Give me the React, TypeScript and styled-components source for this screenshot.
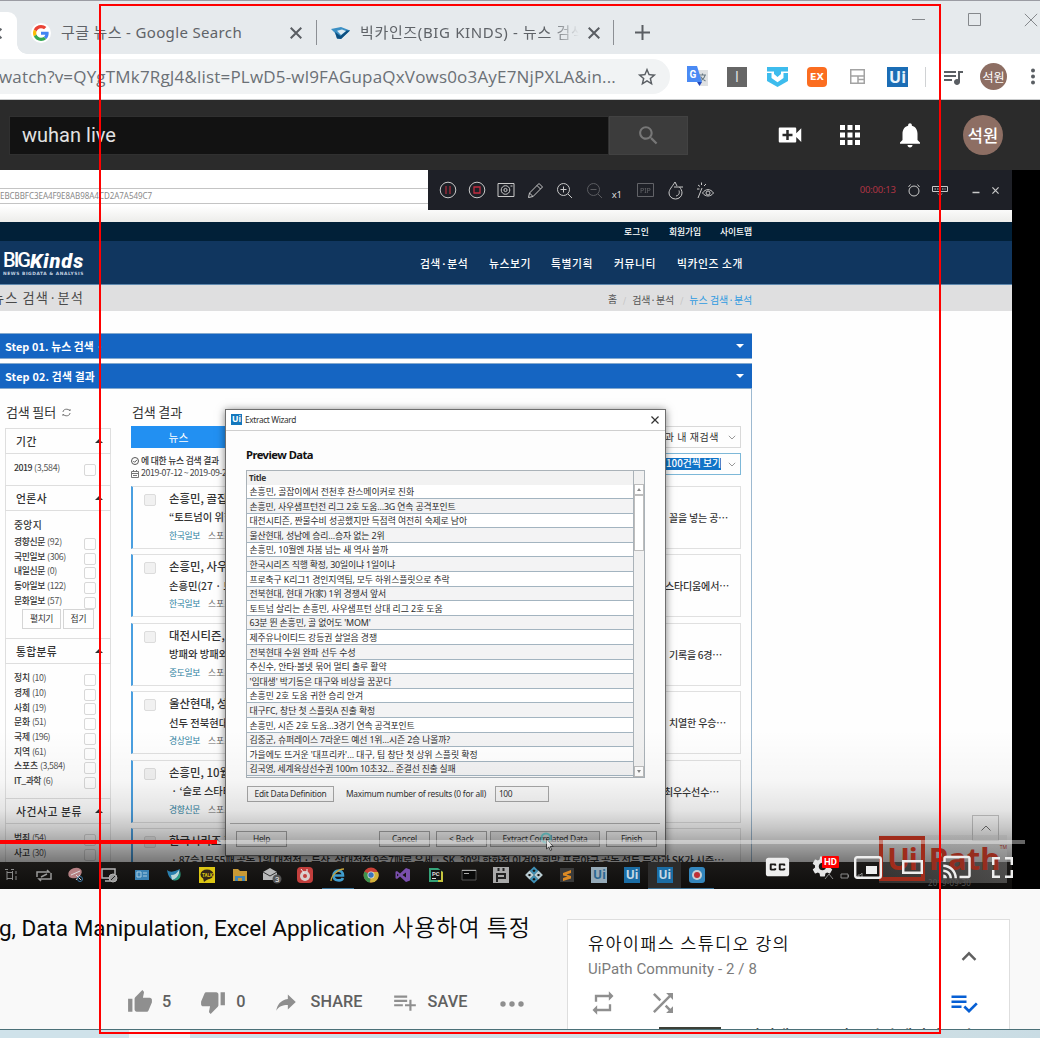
import React, { useLayoutEffect, useRef, useState } from "react";
import styled, { createGlobalStyle } from "styled-components";

const KR = `"Noto Sans", "Noto Sans CJK KR", sans-serif`;
const KRPAGE = `"Noto Sans CJK KR", sans-serif`;
const RB = `Roboto, "Noto Sans CJK KR", sans-serif`;

const Global = createGlobalStyle`
  * { box-sizing: border-box; }
  html, body { margin: 0; padding: 0; background: #f9f9f9; }
  body { font-family: ${KR}; }
  svg { display: block; flex: none; }
`;

/* ---------- text and icon primitives ---------- */

interface TextProps {
  $size: number;
  $color?: string;
  $weight?: number;
  $font?: string;
  $ml?: number;
  $mt?: number;
  $italic?: boolean;
}

const Text = styled.span<TextProps>`
  flex: none;
  white-space: pre;
  line-height: 1;
  font-family: ${(p) => p.$font ?? KRPAGE};
  font-size: ${(p) => p.$size}px;
  font-weight: ${(p) => p.$weight ?? 400};
  font-style: ${(p) => (p.$italic ? "italic" : "normal")};
  color: ${(p) => p.$color ?? "#333"};
  margin-left: ${(p) => p.$ml ?? 0}px;
  margin-top: ${(p) => p.$mt ?? 0}px;
`;

/* Text that spreads its letters to fill a given width. */
function Fit({ w, children, ...rest }: TextProps & { w: number; children: string }) {
  const ref = useRef<HTMLSpanElement>(null);
  const [spacing, setSpacing] = useState<number | null>(null);
  useLayoutEffect(() => {
    if (spacing === null && ref.current) {
      const natural = ref.current.getBoundingClientRect().width;
      setSpacing((w - natural) / children.length);
    }
  }, [spacing, w, children]);
  return (
    <Text ref={ref} {...rest} style={{ letterSpacing: spacing ?? 0 }}>
      {children}
    </Text>
  );
}

const Cell = styled.div<{ $w: number; $ml?: number }>`
  flex: none;
  display: flex;
  align-items: center;
  justify-content: center;
  width: ${(p) => p.$w}px;
  margin-left: ${(p) => p.$ml ?? 0}px;
`;

function Icon({ d, s = 24, c = "#606060" }: { d: string; s?: number; c?: string }) {
  return (
    <svg width={s} height={s} viewBox="0 0 24 24" fill={c}>
      <path d={d} />
    </svg>
  );
}

const P = {
  up: "M1 21h4V9H1v12zm22-11c0-1.1-.9-2-2-2h-6.31l.95-4.57.03-.32c0-.41-.17-.79-.44-1.06L14.17 1 7.59 7.59C7.22 7.95 7 8.45 7 9v10c0 1.1.9 2 2 2h9c.83 0 1.54-.5 1.84-1.22l3.02-7.05c.09-.23.14-.47.14-.73v-2z",
  down: "M15 3H6c-.83 0-1.54.5-1.84 1.22l-3.02 7.05c-.09.23-.14.47-.14.73v2c0 1.1.9 2 2 2h6.31l-.95 4.57-.03.32c0 .41.17.79.44 1.06L9.83 23l6.59-6.59c.36-.36.58-.86.58-1.41V5c0-1.1-.9-2-2-2zm4 0v12h4V3h-4z",
  share: "M13.7 9.3V5.1L21 12l-7.3 7v-4.2C8.6 14.8 5.3 16.300 3 20 4 14.700 6.800 10.300 13.700 9.300Z",
  save: "M14 10H2v2h12v-2zm0-4H2v2h12V6zm4 8v-4h-2v4h-4v2h4v4h2v-4h4v-2h-4zM2 16h8v-2H2v2z",
  saved: "M14 10H2v2h12v-2zm0-4H2v2h12V6zM2 16h8v-2H2v2zm19.5-4.500L23 13l-6.990 7-4.510-4.500L13 14l3.010 3 5.490-5.500z",
  repeat: "M7 7h10v3l4-4-4-4v3H5v6h2V7zm10 10H7v-3l-4 4 4 4v-3h12v-6h-2v4z",
  shuffle: "M10.590 9.170L5.410 4 4 5.410l5.170 5.170 1.420-1.410zM14.500 4l2.040 2.040L4 18.590 5.410 20 17.960 7.460 20 9.500V4h-5.500zm.33 9.410l-1.410 1.410 3.130 3.130L14.500 20H20v-5.500l-2.040 2.040-3.130-3.130z",
  search: "M15.5 14h-.79l-.28-.27C15.41 12.59 16 11.11 16 9.5 16 5.91 13.09 3 9.5 3S3 5.91 3 9.5 5.91 16 9.5 16c1.61 0 3.09-.59 4.23-1.57l.27.28v.79l5 4.99L20.49 19l-4.99-5zm-6 0C7.01 14 5 11.99 5 9.5S7.01 5 9.5 5 14 7.01 14 9.5 11.99 14 9.5 14z",
  create: "M17 10.500V7c0-.55-.45-1-1-1H4c-.55 0-1 .45-1 1v10c0 .55.45 1 1 1h12c.55 0 1-.45 1-1v-3.500l4 4v-11l-4 4zM14 13h-3v3H9v-3H6v-2h3V8h2v3h3v2z",
  apps: "M4 8h4V4H4v4zm6 12h4v-4h-4v4zm-6 0h4v-4H4v4zm0-6h4v-4H4v4zm6 0h4v-4h-4v4zm6-10v4h4V4h-4zm-6 4h4V4h-4v4zm6 6h4v-4h-4v4zm0 6h4v-4h-4v4z",
  bell: "M12 22c1.100 0 2-.9 2-2h-4c0 1.100.89 2 2 2zm6-6v-5c0-3.070-1.640-5.640-4.500-6.320V4c0-.83-.67-1.500-1.500-1.500s-1.500.67-1.500 1.500v.68C7.630 5.360 6 7.920 6 11v5l-2 2v1h16v-1l-2-2z",
  cast: "M21 3H3c-1.1 0-2 .9-2 2v3h2V5h18v14h-7v2h7c1.1 0 2-.9 2-2V5c0-1.1-.9-2-2-2zM1 18v3h3c0-1.66-1.34-3-3-3zm0-4v2c2.76 0 5 2.240 5 5h2c0-3.870-3.130-7-7-7zm0-4v2c4.970 0 9 4.030 9 9h2c0-6.080-4.930-11-11-11z",
  gear: "M19.14 12.94c.04-.3.06-.61.06-.94 0-.32-.02-.64-.07-.94l2.03-1.58c.18-.14.23-.41.12-.61l-1.92-3.32c-.12-.22-.37-.29-.59-.22l-2.39.96c-.5-.38-1.03-.7-1.62-.94l-.36-2.54c-.04-.24-.24-.41-.48-.41h-3.84c-.24 0-.43.17-.47.41l-.36 2.54c-.59.24-1.13.57-1.62.94l-2.39-.96c-.22-.08-.47 0-.59.22L2.74 8.87c-.12.21-.08.47.12.61l2.03 1.58c-.05.3-.09.63-.09.94s.02.64.07.94l-2.03 1.58c-.18.14-.23.41-.12.61l1.92 3.32c.12.22.37.29.59.22l2.39-.96c.5.38 1.03.7 1.62.94l.36 2.54c.05.24.24.41.48.41h3.84c.24 0 .44-.17.47-.41l.36-2.54c.59-.24 1.13-.56 1.62-.94l2.39.96c.22.08.47 0 .59-.22l1.92-3.32c.12-.22.07-.47-.12-.61l-2.01-1.58zM12 15.6c-1.98 0-3.6-1.62-3.6-3.6s1.62-3.6 3.6-3.6 3.6 1.62 3.6 3.6-1.62 3.6-3.6 3.6z",
  cc: "M19 4H5c-1.110 0-2 .9-2 2v12c0 1.100.89 2 2 2h14c1.100 0 2-.9 2-2V6c0-1.100-.9-2-2-2zm-8 7H9.500v-.5h-2v3h2V13H11v1c0 .55-.45 1-1 1H7c-.55 0-1-.45-1-1v-4c0-.55.45-1 1-1h3c.55 0 1 .45 1 1v1zm7 0h-1.500v-.5h-2v3h2V13H18v1c0 .55-.45 1-1 1h-3c-.55 0-1-.45-1-1v-4c0-.55.45-1 1-1h3c.55 0 1 .45 1 1v1z",
  queue: "M15 6H3v2h12V6zm0 4H3v2h12v-2zM3 16h8v-2H3v2zM17 6v8.18c-.31-.11-.65-.18-1-.18-1.660 0-3 1.340-3 3s1.340 3 3 3 3-1.340 3-3V8h3V6h-5z",
  star: "M22 9.240l-7.190-.62L12 2 9.190 8.630 2 9.240l5.460 4.730L5.820 21 12 17.270 18.180 21l-1.630-7.030L22 9.240zM12 15.400l-3.760 2.270 1-4.280-3.320-2.880 4.380-.38L12 6.100l1.710 4.040 4.380.38-3.320 2.880 1 4.280L12 15.400z",
};

/* ---------- page shell ---------- */

const Page = styled.div`
  position: relative;
  width: 1040px;
  height: 1038px;
  overflow: hidden;
  display: flex;
  flex-direction: column;
  background: #f9f9f9;
`;

const Marker = styled.div`
  position: absolute;
  left: 99px;
  top: 4px;
  width: 842px;
  height: 1030px;
  border: 2px solid #ff0000;
  z-index: 20;
`;

/* ---------- browser chrome ---------- */

const TabStrip = styled.div`
  flex: none;
  height: 54px;
  display: flex;
  background: #e6eaed;
  border-top: 1px solid #9b9ca3;
`;

const ActiveTab = styled.div`
  width: 17px;
  height: 42px;
  margin-top: 11px;
  background: #fff;
  border-top-right-radius: 9px;
  display: flex;
  align-items: center;
  overflow: hidden;
  svg { margin-left: -9px; }
`;

const TabFlare = styled.div`
  width: 10px;
  height: 10px;
  align-self: flex-end;
  background: radial-gradient(circle at 100% 0, #e6eaed 9.500px, #fff 10px);
`;

const TabRow = styled.div`
  height: 63px;
  display: flex;
  align-items: center;
`;

const TabLine = styled.div<{ $ml: number }>`
  width: 1px;
  height: 25px;
  background: #8c8f94;
  margin-left: ${(p) => p.$ml}px;
`;

const GBadge = styled.div`
  width: 20px;
  height: 20px;
  border-radius: 50%;
  background: #fff;
  display: flex;
  align-items: center;
  justify-content: center;
  margin-left: 4px;
`;

const FadeTitle = styled.div`
  width: 219px;
  overflow: hidden;
  margin-left: 10px;
  display: flex;
  padding: 4px 0;
  -webkit-mask-image: linear-gradient(90deg, #000 190px, transparent 219px);
  mask-image: linear-gradient(90deg, #000 190px, transparent 219px);
`;

const WindowButtons = styled.div`
  display: flex;
  align-items: center;
  height: 37px;
  margin-left: 262px;
  gap: 43px;
`;

function Cross({ s, w, c }: { s: number; w: number; c: string }) {
  return (
    <svg width={s} height={s} viewBox="0 0 10 10" stroke={c} strokeWidth={(w * 10) / s}>
      <path d="M.6 .6L9.400 9.400M9.400 .6L.6 9.400" />
    </svg>
  );
}

const Toolbar = styled.div`
  flex: none;
  height: 46px;
  display: flex;
  align-items: center;
  background: #fff;
  border-bottom: 1px solid #c9cbcc;
`;

const Omnibox = styled.div`
  flex: none;
  width: 670px;
  height: 35px;
  border-radius: 0 18px 18px 0;
  background: #f1f3f4;
  display: flex;
  align-items: center;
`;

const Tile = styled.div<{ $bg: string; $ml: number; $r?: number; $w?: number }>`
  flex: none;
  width: ${(p) => p.$w ?? 20}px;
  height: 20px;
  margin-left: ${(p) => p.$ml}px;
  border-radius: ${(p) => p.$r ?? 0}px;
  background: ${(p) => p.$bg};
  display: flex;
  align-items: center;
  justify-content: center;
`;

const Avatar = styled.div<{ $s: number; $ml: number }>`
  flex: none;
  width: ${(p) => p.$s}px;
  height: ${(p) => p.$s}px;
  margin-left: ${(p) => p.$ml}px;
  border-radius: 50%;
  background: #8d6e63;
  display: flex;
  align-items: center;
  justify-content: center;
`;

const ThinLine = styled.div`
  width: 1px;
  height: 20px;
  background: #d0d2d4;
  margin-left: 17px;
`;

function Browser() {
  return (
    <>
      <TabStrip>
        <ActiveTab><Cross s={11} w={2} c="#5f6368" /></ActiveTab>
        <TabFlare />
        <TabRow>
          <GBadge>
            <svg width="16" height="16" viewBox="0 0 48 48">
              <path fill="#EA4335" d="M24 9.5c3.540 0 6.710 1.220 9.210 3.600l6.850-6.850C35.900 2.380 30.470 0 24 0 14.620 0 6.510 5.380 2.560 13.220l7.980 6.190C12.430 13.720 17.740 9.500 24 9.500z" />
              <path fill="#4285F4" d="M46.980 24.550c0-1.570-.15-3.090-.38-4.550H24v9.020h12.940c-.58 2.960-2.260 5.480-4.780 7.180l7.730 6c4.510-4.180 7.090-10.360 7.090-17.650z" />
              <path fill="#FBBC05" d="M10.530 28.590c-.48-1.450-.76-2.990-.76-4.590s.27-3.140.76-4.590l-7.980-6.190C.92 16.460 0 20.120 0 24c0 3.880.92 7.540 2.560 10.780l7.970-6.190z" />
              <path fill="#34A853" d="M24 48c6.480 0 11.930-2.130 15.890-5.810l-7.730-6c-2.150 1.450-4.920 2.300-8.160 2.300-6.260 0-11.570-4.220-13.470-9.910l-7.980 6.190C6.510 42.620 14.620 48 24 48z" />
            </svg>
          </GBadge>
          <Fit w={181} $ml={10} $size={15} $color="#5f6368" $font={KR}>구글 뉴스 - Google Search</Fit>
          <Cell $w={12} $ml={48}><Cross s={12} w={2} c="#5a5e63" /></Cell>
          <TabLine $ml={14} />
          <Cell $w={20} $ml={13}>
            <svg width="19" height="12" viewBox="0 0 19 12">
              <path fill="#3b8fc4" d="M0 2L10 0l9 3.500L10 12 6 11.500 4 6z" />
              <path fill="#0d4f80" d="M10 12L19 3.500l-3.500 0L9.500 9l-5.500-4L6 11.500z" />
              <path fill="#dcebf3" d="M6 3.800l5-1.200 4 1.300-5 4z" />
            </svg>
          </Cell>
          <FadeTitle>
            <Fit w={230} $size={15} $color="#5f6368" $font={KR}>빅카인즈(BIG KINDS) - 뉴스 검색·</Fit>
          </FadeTitle>
          <Cell $w={12} $ml={9}><Cross s={12} w={2} c="#5a5e63" /></Cell>
          <TabLine $ml={13} />
          <Cell $w={16} $ml={20}>
            <svg width="15" height="15" viewBox="0 0 15 15" stroke="#5a5e63" strokeWidth="2"><path d="M7.500 0v15M0 7.500h15" /></svg>
          </Cell>
        </TabRow>
        <WindowButtons>
          <svg width="13" height="13" viewBox="0 0 13 13" stroke="#85888c"><path d="M0 6.500h13" /></svg>
          <svg width="13" height="13" viewBox="0 0 13 13" stroke="#85888c" fill="none"><path d="M.5 .5h12v12h-12z" /></svg>
          <Cross s={14} w={1} c="#85888c" />
        </WindowButtons>
      </TabStrip>
      <Toolbar>
        <Omnibox>
          <Fit w={617} $ml={-1} $size={17} $color="#6b7076" $font={`"Open Sans", sans-serif`}>watch?v=QYgTMk7RgJ4&list=PLwD5-wl9FAGupaQxVows0o3AyE7NjPXLA&in...</Fit>
          <Cell $w={22} $ml={20}><Icon d={P.star} s={22} c="#5a5e63" /></Cell>
        </Omnibox>
        <Cell $w={22} $ml={16}>
          <svg width="21" height="21" viewBox="0 0 21 21">
            <path fill="#dfe1e3" d="M8 4h13v16H13z" />
            <path stroke="#697a85" strokeWidth="1.200" fill="none" d="M12 9h7M15.500 7.500V9M18 9c-.5 3-3 5-5 6M13.500 10.500c1 2 3 3.500 5 4.500" />
            <path fill="#4a8af4" d="M0 0h10l5 16H0z" />
            <path fill="#2246b8" d="M10 16h5l-2.500 4z" />
            <text x="2.500" y="12" fontSize="10" fontWeight="700" fill="#fff" fontFamily="Roboto">G</text>
          </svg>
        </Cell>
        <Tile $bg="#666" $ml={19}><Text $size={14} $color="#ddd" $font={RB}>I</Text></Tile>
        <Cell $w={22} $ml={19}>
          <svg width="21" height="20" viewBox="0 0 21 20">
            <path fill="#3dbced" d="M0 0h21v4.500H14V7l-3.500 3L7 7V4.500H0z" />
            <path fill="#3dbced" d="M0 6h4.500v5l6 4.200L16.500 11V6H21v8l-10.500 6L0 14z" />
          </svg>
        </Cell>
        <Tile $bg="#fb6d20" $r={4} $ml={19}><Text $size={9.5} $weight={700} $color="#fff" $font={`"DejaVu Sans"`}>EX</Text></Tile>
        <Cell $w={16} $ml={22}>
          <svg width="15" height="15" viewBox="0 0 15 15" fill="none" stroke="#a3a3a3" strokeWidth="1.500"><path d="M.75 .75h13.500v13.500H.75zM.75 7h13.500M8 7v7.500M8 10.500h6" /></svg>
        </Cell>
        <Tile $bg="#1b6db5" $ml={22} $w={21}><Text $size={16} $weight={700} $color="#e8f3fb" $font={`"Noto Sans"`}>Ui</Text></Tile>
        <ThinLine />
        <Cell $w={24} $ml={15}><Icon d={P.queue} s={24} c="#5a5e63" /></Cell>
        <Avatar $s={27} $ml={15}><Text $size={12} $color="#fff">석원</Text></Avatar>
        <Cell $w={6} $ml={23}>
          <svg width="6" height="17" viewBox="0 0 6 17" fill="#5a5e63"><circle cx="3" cy="2.500" r="2" /><circle cx="3" cy="8.500" r="2" /><circle cx="3" cy="14.500" r="2" /></svg>
        </Cell>
      </Toolbar>
    </>
  );
}

/* ---------- YouTube masthead ---------- */

const Masthead = styled.div`
  flex: none;
  height: 70px;
  display: flex;
  align-items: center;
  background: #2b2b2b;
`;

const SearchBox = styled.div`
  width: 600px;
  height: 39px;
  margin-left: 9px;
  background: #121212;
  border: 1px solid #303030;
  display: flex;
  align-items: center;
`;

const SearchButton = styled.div`
  width: 79px;
  height: 39px;
  background: #3c3c3c;
  border: 1px solid #424242;
  display: flex;
  align-items: center;
  justify-content: center;
`;

function Header() {
  return (
    <Masthead>
      <SearchBox><Fit w={94} $ml={12} $size={20} $color="#e2e2e2" $font={RB}>wuhan live</Fit></SearchBox>
      <SearchButton><Icon d={P.search} s={25} c="#777" /></SearchButton>
      <Cell $w={30} $ml={87}><Icon d={P.create} s={30} c="#fff" /></Cell>
      <Cell $w={30} $ml={30}><Icon d={P.apps} s={30} c="#fff" /></Cell>
      <Cell $w={30} $ml={30}><Icon d={P.bell} s={30} c="#fff" /></Cell>
      <Avatar $s={40} $ml={38}><Text $size={16.5} $color="#fff" $weight={500}>석원</Text></Avatar>
    </Masthead>
  );
}

/* ---------- recorded screen ---------- */

const Player = styled.div`
  flex: none;
  position: relative;
  height: 719px;
  background: #000;
  overflow: hidden;
`;

const Screen = styled.div`
  position: relative;
  width: 1012px;
  height: 692px;
  background: #fefefe;
  display: flex;
  flex-direction: column;
  overflow: hidden;
`;

const AddressArea = styled.div`
  flex: none;
  height: 52px;
  padding-top: 18px;
  background: linear-gradient(#fff 36px, #ececea 52px);
`;

const AddressField = styled.div`
  height: 16px;
  border: solid #c4c4c4;
  border-width: 1px 0;
  background: #fff;
  display: flex;
  align-items: center;
`;

const Recorder = styled.div`
  position: absolute;
  left: 428px;
  top: 0;
  width: 584px;
  height: 40px;
  background: #1e2027;
  display: flex;
  align-items: center;
  svg { fill: none; stroke: #c9c9c9; }
`;

function RecorderBar() {
  return (
    <Recorder>
      <Cell $w={29.3} $ml={5}>
        <svg width="18" height="18" viewBox="0 0 18 18"><circle cx="9" cy="9" r="7.800" /><path stroke="#a62b3b" strokeWidth="1.300" d="M7 5v8M11 5v8" /></svg>
      </Cell>
      <Cell $w={29.3}>
        <svg width="18" height="18" viewBox="0 0 18 18"><circle cx="9" cy="9" r="7.800" /><path stroke="#c22c40" strokeWidth="1.300" d="M6 6h6v6H6z" /></svg>
      </Cell>
      <Cell $w={29.3}>
        <svg width="18" height="16" viewBox="0 0 18 16"><path d="M1 1.500h16v13H1z" /><circle cx="8.500" cy="8" r="4.300" /><circle cx="8.500" cy="8" r="1.600" /><path d="M13.500 4h2" /></svg>
      </Cell>
      <Cell $w={29.3}>
        <svg width="17" height="17" viewBox="0 0 17 17"><path d="M1.500 15.500l1-4.500L12 1.500 15.500 5 6 14.500zM2.500 11L6 14.500M10 3.500L13.500 7" /></svg>
      </Cell>
      <Cell $w={29.3}>
        <svg width="17" height="17" viewBox="0 0 17 17"><circle cx="7.500" cy="7.500" r="6" /><path d="M12 12l4 4M4.500 7.500h6M7.500 4.500v6" /></svg>
      </Cell>
      <Cell $w={29.3}>
        <svg width="17" height="17" viewBox="0 0 17 17" opacity=".35"><circle cx="7.500" cy="7.500" r="6" /><path d="M12 12l4 4M4.500 7.500h6" /></svg>
      </Cell>
      <Fit w={10} $ml={3} $mt={10} $size={9.5} $color="#ddd" $font={`"Noto Sans"`}>{"x1"}</Fit>
      <Cell $w={18} $ml={15}>
        <svg width="17" height="14" viewBox="0 0 17 14" opacity=".4"><path d="M.5 .5h16v13H.5z" /><text x="3" y="9.700" fontSize="7" fill="#ccc" stroke="none" fontFamily="Noto Sans">PIP</text></svg>
      </Cell>
      <Cell $w={18} $ml={12}>
        <svg width="15" height="19" viewBox="0 0 15 19"><path d="M7 1C4 6 1 8.500 1 12a6.500 6 0 0 0 13 0C14 9.500 13 8 11.500 6M7 1l2 4M6 6h9M11 9.500c1 3-.5 5-3 5.500" /></svg>
      </Cell>
      <Cell $w={18} $ml={12}>
        <svg width="17" height="17" viewBox="0 0 17 17"><path d="M1 16L5 6M1 3l2 1.500M4.500 .5V3M9 2L7 4M0 7h2.500M5.500 11c3-4.500 8-4.500 11 0-3 4-8 4-11 0z" /><circle cx="11" cy="11" r="2" /></svg>
      </Cell>
      <Fit w={36} $ml={145} $size={9.5} $color="#b03444" $font={`"Noto Sans"`}>00:00:13</Fit>
      <Cell $w={14} $ml={11}>
        <svg width="14" height="15" viewBox="0 0 14 15"><circle cx="7" cy="8" r="5" /><path d="M1.500 4l2-2.500M12.500 4l-2-2.500" /></svg>
      </Cell>
      <Cell $w={18} $ml={10}>
        <svg width="16" height="11" viewBox="0 0 16 11"><path d="M.5 1.500h15v5H.5z" /><path strokeDasharray="1.500 1" d="M2.500 4h11" /><path d="M6 8.500l2 2 2-2" /></svg>
      </Cell>
      <Cell $w={10} $ml={22}>
        <svg width="8" height="8" viewBox="0 0 8 8"><path strokeWidth="1.500" d="M.5 6.500h7" /></svg>
      </Cell>
      <Cell $w={10} $ml={10}><Cross s={7} w={1.2} c="#ddd" /></Cell>
    </Recorder>
  );
}

const TopNav = styled.div`
  flex: none;
  height: 19px;
  padding-top: 1px;
  background: #012038;
  display: flex;
  align-items: center;
`;

const MainNav = styled.div`
  flex: none;
  height: 44px;
  padding-top: 2px;
  background: #10365f;
  border-bottom: 1px solid #5f88ad;
  display: flex;
  align-items: center;
`;

const Logo = styled.div`
  width: 82px;
  margin-left: 3px;
  display: flex;
  flex-direction: column;
  align-items: flex-start;
  gap: 2px;
`;

const LogoRow = styled.div`
  display: flex;
  align-items: center;
  height: 20px;
`;

const Crumbs = styled.div`
  flex: none;
  height: 26px;
  background: #dfdfe0;
  display: flex;
  align-items: center;
`;

const StepBar = styled.div<{ $mt: number }>`
  flex: none;
  width: 752px;
  height: 26px;
  margin-top: ${(p) => p.$mt}px;
  background: #1565c2;
  border: solid #84a9ce;
  border-width: 1px 0;
  display: flex;
  align-items: center;
  justify-content: space-between;
  padding: 0 8px 0 5px;
`;

const Caret = styled.div<{ $up?: boolean; $c?: string }>`
  width: 0;
  height: 0;
  border: 4px solid transparent;
  ${(p) => (p.$up ? `border-bottom-color: ${p.$c ?? "#333"}; border-top-width: 0;` : `border-top-color: ${p.$c ?? "#fff"}; border-bottom-width: 0;`)}
`;

const Body = styled.div`
  flex: 1;
  width: 752px;
  min-height: 0;
  border-right: 1px solid #9db9d0;
  display: flex;
  align-items: flex-start;
`;

const Filters = styled.div`
  width: 106px;
  flex: none;
  margin-left: 5px;
  display: flex;
  flex-direction: column;
`;

const Heading = styled.div<{ $h: number }>`
  height: ${(p) => p.$h}px;
  padding-top: 8px;
  display: flex;
  align-items: center;
`;

const FilterHead = styled.div`
  height: 26px;
  flex: none;
  border: 1px solid #dedede;
  display: flex;
  align-items: center;
  justify-content: space-between;
  padding: 0 7px 0 10px;
`;

const FilterBody = styled.div<{ $h: number; $pt: number }>`
  flex: none;
  height: ${(p) => p.$h}px;
  padding-top: ${(p) => p.$pt}px;
  border: solid #e2e2e2;
  border-width: 0 1px;
`;

const GroupName = styled.div`
  height: 18px;
  display: flex;
  align-items: center;
`;

const FilterRow = styled.div`
  height: 14.680px;
  padding: 0 14px 0 8px;
  display: flex;
  align-items: center;
  justify-content: space-between;
`;

const Check = styled.div`
  flex: none;
  width: 12px;
  height: 12px;
  margin-top: 3px;
  border: 1px solid #d8d8d8;
  border-radius: 2px;
`;

const SmallButtons = styled.div`
  display: flex;
  gap: 2px;
  margin: 1px 0 0 16px;
`;

const SmallButton = styled.div<{ $w: number }>`
  width: ${(p) => p.$w}px;
  height: 20px;
  border: 1px solid #d5d5d5;
  display: flex;
  align-items: center;
  justify-content: center;
`;

const Name = styled.span`
  display: flex;
  align-items: center;
`;

function FilterItem({ name, count, w, cw }: { name: string; count: string; w: number; cw: number }) {
  return (
    <FilterRow>
      <Name>
        <Fit w={w} $size={8.8} $weight={500}>{name}</Fit>
        <Fit w={cw} $ml={2} $size={8.8} $color="#555">{`(${count})`}</Fit>
      </Name>
      <Check />
    </FilterRow>
  );
}

const Results = styled.div`
  flex: none;
  width: 610px;
  margin-left: 20px;
  display: flex;
  flex-direction: column;
`;

const Controls = styled.div`
  flex: none;
  display: flex;
  justify-content: space-between;
  height: 59.500px;
`;

const ControlLeft = styled.div`
  width: 120px;
  display: flex;
  flex-direction: column;
`;

const NewsTab = styled.div`
  width: 95px;
  height: 22px;
  margin-bottom: 7px;
  background: #2290f2;
  display: flex;
  align-items: center;
  justify-content: center;
`;

const MetaLine = styled.div`
  height: 12.500px;
  display: flex;
  align-items: center;
  gap: 2px;
`;

const ControlRight = styled.div`
  width: 120px;
  display: flex;
  flex-direction: column;
  gap: 5px;
`;

const SelectBox = styled.div<{ $c: string; $gap: number }>`
  height: 22px;
  border: 1px solid ${(p) => p.$c};
  display: flex;
  align-items: center;
  justify-content: flex-end;
  gap: ${(p) => p.$gap}px;
  padding-right: 4px;
`;

const Selected = styled.div`
  background: #1173c7;
  padding: 1px 0 1px 2px;
  display: flex;
`;

const Card = styled.div`
  flex: none;
  height: 63px;
  margin-bottom: 5.500px;
  border: 1px solid #e0e0e0;
  border-left: 2px solid #4a9fe0;
  display: flex;
  background: #fefefe;
`;

const CardCheck = styled.div`
  width: 12px;
  height: 12px;
  margin: 7px 0 0 11px;
  border: 1px solid #dcdcdc;
  border-radius: 2px;
  background: #f1f1f1;
`;

const CardBody = styled.div`
  flex: 1;
  margin-left: 13px;
  padding-top: 4px;
  display: flex;
  flex-direction: column;
`;

const CardLine = styled.div<{ $h: number }>`
  height: ${(p) => p.$h}px;
  display: flex;
  align-items: center;
`;

const LeadStart = styled.div`
  flex: none;
  width: 110px;
  display: flex;
`;

interface News { title: string; lead: string; src: string; tail?: string; tx?: number; tw?: number; leadW?: number }

const news: News[] = [
  { title: "손흥민, 골집이에서", lead: "“토트넘이 위한 최고", src: "한국일보", tail: "꼴을 넣는 공⋯", tx: 669, tw: 59 },
  { title: "손흥민, 사우샘프", lead: "손흥민(27 · 토트넘", src: "한국일보", tail: "스타디움에서⋯", tx: 665, tw: 64 },
  { title: "대전시티즌, 짠물", lead: "방패와 방패와의 승", src: "중도일보", tail: "기록을 6경⋯", tx: 669, tw: 53 },
  { title: "울산현대, 성남에", lead: "선두 전북현대를", src: "경상일보", tail: "치열한 우승⋯", tx: 669, tw: 57 },
  { title: "손흥민, 10월엔", lead: " · ‘슬로 스타터’", src: "경향신문", tail: "최우수선수⋯", tx: 664, tw: 55 },
  { title: "한국시리즈 직행", lead: " · 87승1무55패 공동 1위 대전전 · 두산, 상대전적 9승7패로 우세 · SK, 30일 한화전 이겨야 희망 프로야구 공동 선두 두산과 SK가 시즌⋯", src: "한국일보", leadW: 555 },
];

function Chevron() {
  return <svg width="8" height="5" viewBox="0 0 8 5" fill="none" stroke="#999"><path d="M.8 .8L4 4 7.200 .8" /></svg>;
}

function NewsCard({ n }: { n: News }) {
  return (
    <Card>
      <CardCheck />
      <CardBody>
        <CardLine $h={16}><Text $size={11.4} $weight={500}>{n.title}</Text></CardLine>
        <CardLine $h={22}>
          {n.leadW ? <Fit w={n.leadW} $size={10.3} $weight={500}>{n.lead}</Fit> : (
            <>
              <LeadStart><Text $size={10.3} $weight={500}>{n.lead}</Text></LeadStart>
              <Fit w={n.tw ?? 50} $ml={(n.tx ?? 669) - 279} $size={10} $weight={500}>{n.tail ?? ""}</Fit>
            </>
          )}
        </CardLine>
        <CardLine $h={15}>
          <Fit w={31} $size={8.8} $color="#2d7f9e">{n.src}</Fit>
          <Text $size={8.8} $ml={8} $color="#666">스포츠</Text>
        </CardLine>
      </CardBody>
    </Card>
  );
}

const ToTop = styled.div`
  position: absolute;
  left: 972px;
  top: 645px;
  width: 27px;
  height: 26px;
  border: 1px solid #c9c9c9;
  display: flex;
  align-items: center;
  justify-content: center;
`;

/* ---------- wizard dialog ---------- */

const Dialog = styled.div`
  position: absolute;
  left: 225px;
  top: 239px;
  width: 441px;
  height: 447px;
  border: 1px solid #6f6f6f;
  background: #fdfdfd;
  box-shadow: 0 1px 8px rgba(0, 0, 0, 0.5);
  display: flex;
  flex-direction: column;
`;

const DialogTitle = styled.div`
  flex: none;
  height: 21px;
  border-bottom: 1px solid #cfcfcf;
  background: #fff;
  display: flex;
  align-items: center;
  padding: 0 0 1px 5px;
`;

const UiBox = styled.div<{ $s: number; $bg: string }>`
  width: ${(p) => p.$s}px;
  height: ${(p) => p.$s}px;
  background: ${(p) => p.$bg};
  display: flex;
  align-items: center;
  justify-content: center;
`;

const DialogHeading = styled.div`
  flex: none;
  height: 39px;
  padding: 8px 0 0 20px;
  display: flex;
  align-items: center;
`;

const Table = styled.div`
  flex: none;
  width: 399px;
  height: 307.600px;
  margin-left: 20px;
  border: 1px solid #aab2b8;
  display: flex;
`;

const TableMain = styled.div`
  width: 387px;
  border-right: 1px solid #aab2b8;
`;

const TableHead = styled.div`
  height: 13.500px;
  padding-left: 2px;
  background: #f2f2f2;
  display: flex;
  align-items: center;
`;

const TableRow = styled.div<{ $alt: boolean }>`
  height: 14.600px;
  padding: 2.500px 0 0 2.500px;
  background: ${(p) => (p.$alt ? "#f3f3f4" : "#fff")};
  border-bottom: 1px solid #a3b4c0;
  display: flex;
  align-items: center;
`;

const Scroll = styled.div`
  flex: 1;
  background: #f1f1f1;
  display: flex;
  flex-direction: column;
  align-items: center;
  padding-top: 13px;
`;

const ScrollPart = styled.div<{ $h: number; $push?: boolean }>`
  width: 10px;
  height: ${(p) => p.$h}px;
  background: #fff;
  border: 1px solid #bdbdbd;
  display: flex;
  align-items: center;
  justify-content: center;
  overflow: hidden;
  ${(p) => (p.$push ? "margin-top: auto;" : "")}
`;

const ArrowGlyph = styled(Caret)`
  border-width: ${(p) => (p.$up ? "0 2px 3px" : "3px 2px 0")};
`;

const FormRow = styled.div`
  flex: none;
  height: 30.400px;
  padding-top: 8px;
  display: flex;
  align-items: flex-start;
`;

const Box = styled.div<{ $w: number; $ml: number; $bg?: string; $left?: boolean }>`
  flex: none;
  width: ${(p) => p.$w}px;
  height: 16px;
  padding-top: 1px;
  margin-left: ${(p) => p.$ml}px;
  border: 1px solid #a9a9a9;
  background: ${(p) => p.$bg ?? "#fbfbfb"};
  display: flex;
  align-items: center;
  justify-content: ${(p) => (p.$left ? "flex-start" : "center")};
`;

const BoxLabel = styled.div`
  height: 16px;
  padding-top: 1px;
  display: flex;
  align-items: center;
  margin-left: 12px;
`;

const Footer = styled.div`
  margin: 15px 5px 0 4px;
  border-top: 1px solid #b5b5b5;
  padding-top: 7px;
  display: flex;
`;

const rows: [string, number][] = [
  ["손흥민, 골잡이에서 전천후 찬스메이커로 진화", 164.5],
  ["손흥민, 사우샘프턴전 리그 2호 도움...3G 연속 공격포인트", 206],
  ["대전시티즌, 짠물수비 성공했지만 득점력 여전히 숙제로 남아", 217.5],
  ["울산현대, 성남에 승리...승자 없는 2위", 135],
  ["손흥민, 10월엔 차붐 넘는 새 역사 쓸까", 138.5],
  ["한국시리즈 직행 확정, 30일이냐 1일이냐", 145.5],
  ["프로축구 K리그1 경인지역팀, 모두 하위스플릿으로 추락", 200],
  ["전북현대, 현대 가(家) 1위 경쟁서 앞서", 136.5],
  ["토트넘 살리는 손흥민, 사우샘프턴 상대 리그 2호 도움", 193],
  ["63분 뛴 손흥민, 골 없어도 'MOM'", 121],
  ["제주유나이티드 강등권 살얼음 경쟁", 127.5],
  ["전북현대 수원 완파 선두 수성", 106],
  ["추신수, 안타·볼넷 묶어 멀티 출루 활약", 137],
  ["'임대생' 박기동은 대구와 비상을 꿈꾼다", 142],
  ["손흥민 2호 도움 귀한 승리 안겨", 113.5],
  ["대구FC, 창단 첫 스플릿A 진출 확정", 125.5],
  ["손흥민, 시즌 2호 도움...3경기 연속 공격포인트", 165],
  ["김중군, 슈퍼레이스 7라운드 예선 1위...시즌 2승 나올까?", 200.5],
  ["가을에도 뜨거운 '대프리카'... 대구, 팀 창단 첫 상위 스플릿 확정", 228],
  ["김국영, 세계육상선수권 100m 10초32... 준결선 진출 실패", 206],
];

function Wizard() {
  return (
    <Dialog>
      <DialogTitle>
        <UiBox $s={11} $bg="#1478bd"><Text $size={8.5} $weight={700} $color="#fff" $font={`"Noto Sans"`}>Ui</Text></UiBox>
        <Fit w={51} $ml={3} $mt={1} $size={8.3} $font={KR}>Extract Wizard</Fit>
        <Cell $w={9} $ml={354}><Cross s={8} w={1.2} c="#333" /></Cell>
      </DialogTitle>
      <DialogHeading><Fit w={67} $size={11.2} $weight={700} $color="#111" $font={KR}>Preview Data</Fit></DialogHeading>
      <Table>
        <TableMain>
          <TableHead><Fit w={17} $size={8.3} $weight={700} $font={KR}>Title</Fit></TableHead>
          {rows.map(([t, w], i) => (
            <TableRow key={t} $alt={i % 2 === 1}><Fit w={w} $size={8.9} $color="#2c2c2c" $font={KR}>{t}</Fit></TableRow>
          ))}
        </TableMain>
        <Scroll>
          <ScrollPart $h={11}><ArrowGlyph $up $c="#888" /></ScrollPart>
          <ScrollPart $h={56} />
          <ScrollPart $h={11} $push><ArrowGlyph $c="#888" /></ScrollPart>
        </Scroll>
      </Table>
      <FormRow>
        <Box $w={87} $ml={21}><Fit w={72} $size={8.4} $font={KR}>Edit Data Definition</Fit></Box>
        <BoxLabel><Fit w={140} $size={8.4} $font={KR}>Maximum number of results (0 for all)</Fit></BoxLabel>
        <Box $w={54} $ml={9} $left><Fit w={13} $ml={3} $size={8.4} $font={KR}>100</Fit></Box>
      </FormRow>
      <Footer>
        <Box $w={51} $ml={6}><Fit w={17} $size={8.4} $font={KR}>Help</Fit></Box>
        <Box $w={51} $ml={92}><Fit w={25} $size={8.4} $font={KR}>Cancel</Fit></Box>
        <Box $w={51} $ml={6}><Fit w={25} $size={8.4} $font={KR}>{"< Back"}</Fit></Box>
        <Box $w={110} $ml={3} $bg="#e6e6e6"><Fit w={85} $size={8.4} $font={KR}>Extract Correlated Data</Fit></Box>
        <Box $w={51} $ml={6}><Fit w={21} $size={8.4} $font={KR}>Finish</Fit></Box>
      </Footer>
    </Dialog>
  );
}

/* ---------- taskbar, watermark and player overlay ---------- */

const Shade = styled.div`
  position: absolute;
  left: 0;
  top: 560px;
  width: 1012px;
  height: 159px;
  background: linear-gradient(
    rgba(0, 0, 0, 0) 0,
    rgba(0, 0, 0, 0.03) 50px,
    rgba(0, 0, 0, 0.1) 80px,
    rgba(0, 0, 0, 0.22) 98px,
    rgba(0, 0, 0, 0.37) 115px,
    rgba(0, 0, 0, 0.53) 132px,
    rgba(0, 0, 0, 0.7) 159px
  );
`;

const Taskbar = styled.div`
  position: relative;
  width: 1012px;
  height: 27px;
  background: linear-gradient(#1c1a18, #0e0d0c);
  display: flex;
`;

const TaskList = styled.div`
  display: flex;
  margin-left: -5.300px;
`;

const Task = styled.div<{ $on?: boolean; $line?: boolean }>`
  width: 32.700px;
  height: 27px;
  display: flex;
  align-items: center;
  justify-content: center;
  background: ${(p) => (p.$on ? "#2c2c2c" : "transparent")};
  border-bottom: ${(p) => (p.$line || p.$on ? "1px solid #3b6f92" : "1px solid transparent")};
`;

const taskIcons: React.ReactNode[] = [
  <path key="0" d="M4 4v9M9.500 4v9M4 5.500h5.500M4 11.500h5.500M13 4v3M13 9v4M2 2.500h3M8 2.500h3" stroke="#8a8a8a" fill="none" />,
  <path key="1" d="M1 10V5h12l-2-2M15 6v6H3l2 2M5 10l6-3" stroke="#999" fill="none" strokeWidth="1.500" />,
  <g key="2"><ellipse cx="7" cy="6" rx="7" ry="5" fill="#b58083" transform="rotate(-20 7 6)" /><path d="M3 8l9-4M8 8l5 5M8 13l4-5" stroke="#ddd" fill="none" /><circle cx="12" cy="12" r="2.500" stroke="#3f76a3" fill="none" /></g>,
  <g key="3" stroke="#b4b4b4" fill="none"><path d="M9 11H1V2h13v5M4 14h5" strokeWidth="1.500" /><circle cx="12" cy="11" r="4" fill="#999" /><path d="M10 13l4-4" stroke="#222" /></g>,
  <g key="4"><path fill="#3a82b4" d="M1 3h14v10H1z" /><path stroke="#a9cce0" d="M3 5h4v5H3zM9 6h4M9 9h4" fill="none" /></g>,
  <g key="5"><path fill="#2a7fae" d="M1 3c3 3 8 1 8 1l5-2-1 8c-3 5-10 5-12-7z" /><path fill="#bcd8d8" d="M5 8c4 0 6-2 8-5 1 5-3 9-7 10z" /><path fill="#2d9c7c" d="M6 13c4 0 7-4 8-9 2 6-1 11-8 9z" /></g>,
  <g key="6"><path fill="#dcc613" d="M0 0h16v16H0z" /><ellipse cx="8" cy="7.500" rx="6.500" ry="5" fill="#33261a" /><path d="M4 11l1 4 4-3z" fill="#33261a" /><text x="3" y="9.500" fontSize="4.500" fontWeight="700" fill="#dcc613" fontFamily="Roboto">TALK</text></g>,
  <g key="7"><path fill="#c99a36" d="M1 2h5l2 2h7v10H1z" /><path fill="#4386b5" d="M3 9h10v5H10v-3H6v3H3z" /></g>,
  <g key="8"><path fill="#b9b9b9" d="M-2 5l7-4 7 4v8H-2z" /><path d="M-2 5l7 4 7-4" stroke="#333" fill="none" /><circle cx="12" cy="12" r="4.500" fill="#555" /><text x="10" y="15" fontSize="8" fill="#eee" fontFamily="Roboto">3</text></g>,
  <g key="9"><rect width="16" height="16" rx="4" fill="#c33f3d" /><circle cx="8" cy="9" r="5" fill="#d9cfcc" /><circle cx="8" cy="9" r="2" fill="#c33f3d" /><path d="M4 2l3 4M10 2v3" stroke="#eee" /></g>,
  <g key="10" fill="none"><path d="M3.500 8.500h9.500c0-7-9.500-6-9.500 0 0 6 8 6 9.500 2.500" stroke="#3f9dce" strokeWidth="2.600" /><path d="M1 14C1 9 8 2 14 2" stroke="#c6a43b" strokeWidth="1.300" /></g>,
  <g key="11"><circle cx="8" cy="8" r="7.500" fill="#c94036" /><path fill="#3f934d" d="M8 8L1.500 4.500A7.500 7.500 0 0 0 7 15.500z" /><path fill="#d2b23a" d="M8 8l-1 7.500A7.500 7.500 0 0 0 15 5H8z" /><circle cx="8" cy="8" r="3.500" fill="#ddd" /><circle cx="8" cy="8" r="2.700" fill="#3974bd" /></g>,
  <path key="12" fill="#7a4fae" d="M11 1l4 1.500v11L11 15 5 9.500 2 12l-1.500-.8V4.800L2 4l3 2.500zM11 5.500L7.500 8 11 10.500zM2 6.500v3L3.700 8z" />,
  <g key="13"><path fill="#35a379" d="M1 1h9l5 4v10H1z" /><path fill="#c7c53e" d="M11 3l4 2v10h-5z" /><path fill="#151515" d="M3 3h10v10H3z" /><text x="4" y="9" fontSize="6" fontWeight="700" fill="#ddd" fontFamily="Roboto">PC</text><path stroke="#ddd" d="M4 11.500h4" /></g>,
  <g key="14"><path fill="#0a0a0a" stroke="#555" d="M1 3h14v10H1z" /><path stroke="#aaa" d="M1 3.500h14M3 6.500h5" /></g>,
  <g key="15"><path fill="#a9a9a9" d="M0 0h16v16H0z" /><path stroke="#222" strokeWidth="2" fill="none" d="M4 15V7h8v4H5M5.500 1v3M10.500 1v3" /></g>,
  <g key="16" fill="none" stroke="#3f8fb4" strokeWidth="2"><path d="M8 .8l3 3-3 3-3-3zM8 9.200l3 3-3 3-3-3z" /><path stroke="#b9ccd3" d="M3.500 5l3 3-3 3-3-3zM12.500 5l3 3-3 3-3-3z" /></g>,
  <g key="17"><path fill="#3a3a3a" d="M1 1h14v14H1z" /><path fill="#dc8a24" d="M4 6l8-3v3L7.500 7.500 12 9v2.500L4 14v-3l4.500-1.500L4 8.500z" /></g>,
];

const Watermark = styled.div`
  position: absolute;
  left: 879px;
  top: 665px;
  width: 128px;
  height: 48px;
  background: linear-gradient(90deg, rgba(150, 150, 150, 0.25), rgba(160, 160, 160, 0.4));
  display: flex;
  align-items: center;
`;

const WatermarkBox = styled.div`
  width: 46px;
  height: 45px;
  margin-bottom: 1px;
  border: 4px solid #a02c1b;
  display: flex;
  align-items: center;
  justify-content: center;
`;

const TrayDate = styled.div`
  position: absolute;
  left: 928px;
  top: 709px;
  display: flex;
`;

const Tray = styled.div`
  position: absolute;
  left: 823px;
  top: 701px;
  display: flex;
`;

const Progress = styled.div`
  position: absolute;
  left: 0;
  top: 670px;
  width: 1025px;
  height: 4px;
  background: rgba(255, 255, 255, 0.4);
`;

const Played = styled.div`
  width: 217px;
  height: 4px;
  background: #f00;
`;

const Buttons = styled.div`
  position: absolute;
  left: 0;
  top: 679px;
  width: 1040px;
  height: 36px;
  display: flex;
  align-items: center;
`;

const GearWrap = styled.div`
  position: relative;
  width: 26px;
  height: 26px;
  margin-left: 17px;
`;

const HD = styled.div`
  position: absolute;
  left: 12px;
  top: 2px;
  width: 17px;
  height: 12px;
  border-radius: 1px;
  background: #f00;
  display: flex;
  align-items: center;
  justify-content: center;
`;

const Pointer = styled.div`
  position: absolute;
  left: 538px;
  top: 662px;
`;

function Video() {
  return (
    <Player>
      <Screen>
        <AddressArea>
          <AddressField><Fit w={152} $size={8} $color="#8a8a8a" $font={`"Noto Sans"`}>EBCBBFC3EA4F9E8AB98A4CD2A7A549C7</Fit></AddressField>
        </AddressArea>
        <TopNav>
          <Fit w={25} $ml={624} $size={8.8} $color="#fff" $weight={500}>로그인</Fit>
          <Fit w={32} $ml={20} $size={8.8} $color="#fff" $weight={500}>회원가입</Fit>
          <Fit w={32} $ml={19} $size={8.8} $color="#fff" $weight={500}>사이트맵</Fit>
        </TopNav>
        <MainNav>
          <Logo>
            <LogoRow>
              <Fit w={26} $size={20} $weight={500} $color="#fff" $font={`Roboto, sans-serif`}>BIG</Fit>
              <Fit w={54} $ml={1} $mt={1} $size={20} $weight={900} $italic $color="#fff" $font={`Roboto, sans-serif`}>Kinds</Fit>
            </LogoRow>
            <Fit w={81} $size={4.4} $weight={700} $color="#c4d3e2" $font={`"DejaVu Sans"`}>NEWS BIGDATA & ANALYSIS</Fit>
          </Logo>
          <Fit w={48} $ml={335} $size={10.8} $color="#fff" $weight={500}>검색·분석</Fit>
          <Fit w={42} $ml={21} $size={10.8} $color="#fff" $weight={500}>뉴스보기</Fit>
          <Fit w={42} $ml={20} $size={10.8} $color="#fff" $weight={500}>특별기획</Fit>
          <Fit w={42} $ml={21} $size={10.8} $color="#fff" $weight={500}>커뮤니티</Fit>
          <Fit w={66} $ml={21} $size={10.8} $color="#fff" $weight={500}>빅카인즈 소개</Fit>
        </MainNav>
        <Crumbs>
          <Fit w={92} $ml={-8} $mt={-1} $size={13.2} $color="#4a4a4a">뉴스 검색·분석</Fit>
          <Fit w={9} $ml={524} $mt={3} $size={9.8} $color="#555">홈</Fit>
          <Text $ml={6} $mt={3} $size={8} $color="#bbb">/</Text>
          <Fit w={42} $ml={6} $mt={3} $size={10} $color="#555">검색·분석</Fit>
          <Text $ml={6} $mt={3} $size={8} $color="#bbb">/</Text>
          <Fit w={63} $ml={6} $mt={3} $size={10} $color="#2f9be0">뉴스 검색·분석</Fit>
        </Crumbs>
        <StepBar $mt={22}>
          <Fit w={98} $size={10.8} $color="#fff" $weight={700}>Step 01. 뉴스 검색 ·</Fit>
          <Caret />
        </StepBar>
        <StepBar $mt={4}>
          <Fit w={90} $size={10.8} $color="#fff" $weight={700}>Step 02. 검색 결과</Fit>
          <Caret />
        </StepBar>
        <Body>
          <Filters>
            <Heading $h={39}>
              <Fit w={50} $ml={1} $mt={-2} $size={13}>검색 필터</Fit>
              <Cell $w={9} $ml={6}>
                <svg width="9" height="9" viewBox="0 0 9 9" fill="none" stroke="#777"><path d="M1 4c0-3 5-4 7-1V1M8 5c0 3-5 4-7 1v2" /></svg>
              </Cell>
            </Heading>
            <FilterHead><Fit w={21} $size={10.8} $weight={500}>기간</Fit><Caret $up /></FilterHead>
            <FilterBody $h={31} $pt={7}><FilterItem name="2019" count="3,584" w={18} cw={26} /></FilterBody>
            <FilterHead><Fit w={31} $size={10.8} $weight={500}>언론사</Fit><Caret $up /></FilterHead>
            <FilterBody $h={127} $pt={6}>
              <GroupName><Fit w={28} $ml={8} $size={9.8} $weight={500}>중앙지</Fit></GroupName>
              <FilterItem name="경향신문" count="92" w={31} cw={15} />
              <FilterItem name="국민일보" count="306" w={31} cw={19} />
              <FilterItem name="내일신문" count="0" w={31} cw={10} />
              <FilterItem name="동아일보" count="122" w={31} cw={19} />
              <FilterItem name="문화일보" count="57" w={31} cw={15} />
              <SmallButtons>
                <SmallButton $w={39}><Fit w={23} $size={8.8}>펼치기</Fit></SmallButton>
                <SmallButton $w={31}><Fit w={16} $size={8.8}>접기</Fit></SmallButton>
              </SmallButtons>
            </FilterBody>
            <FilterHead><Fit w={41} $size={10.8} $weight={500}>통합분류</Fit><Caret $up /></FilterHead>
            <FilterBody $h={134} $pt={7.3}>
              <FilterItem name="정치" count="10" w={16} cw={14} />
              <FilterItem name="경제" count="10" w={16} cw={14} />
              <FilterItem name="사회" count="19" w={16} cw={14} />
              <FilterItem name="문화" count="51" w={16} cw={14} />
              <FilterItem name="국제" count="196" w={16} cw={18} />
              <FilterItem name="지역" count="61" w={16} cw={14} />
              <FilterItem name="스포츠" count="3,584" w={24} cw={25} />
              <FilterItem name="IT_과학" count="6" w={27} cw={10} />
            </FilterBody>
            <FilterHead><Fit w={66} $size={10.8} $weight={500}>사건사고 분류</Fit><Caret $up /></FilterHead>
            <FilterBody $h={60} $pt={7.5}>
              <FilterItem name="범죄" count="54" w={16} cw={14} />
              <FilterItem name="사고" count="30" w={16} cw={14} />
            </FilterBody>
          </Filters>
          <Results>
            <Heading $h={37}><Fit w={50} $size={13} $ml={1}>검색 결과</Fit></Heading>
            <Controls>
              <ControlLeft>
                <NewsTab><Fit w={20} $size={10.8} $color="#fff">뉴스</Fit></NewsTab>
                <MetaLine>
                  <svg width="8" height="8" viewBox="0 0 8 8" fill="none" stroke="#555"><circle cx="4" cy="4" r="3.500" /><path d="M2.300 4l1.300 1.300L6 2.800" /></svg>
                  <Fit w={78} $size={8.8} $weight={500}>에 대한 뉴스 검색 결과</Fit>
                </MetaLine>
                <MetaLine>
                  <svg width="8" height="8" viewBox="0 0 8 8" fill="none" stroke="#777"><path d="M.5 1.500h7v6h-7zM.5 3.500h7M2.500 0v2M5.500 0v2M2 5.500h4" /></svg>
                  <Fit w={90} $size={8.8} $color="#444">2019-07-12 ~ 2019-09-28</Fit>
                </MetaLine>
              </ControlLeft>
              <ControlRight>
                <SelectBox $c="#d9d9d9" $gap={9}><Fit w={64} $size={10}>결과 내 재검색</Fit><Chevron /></SelectBox>
                <SelectBox $c="#7db8d8" $gap={7}><Selected><Fit w={55} $size={9.8} $color="#fff" $weight={500}>100건씩 보기</Fit></Selected><Chevron /></SelectBox>
              </ControlRight>
            </Controls>
            {news.map((n) => <NewsCard key={n.title} n={n} />)}
          </Results>
        </Body>
        <ToTop>
          <svg width="10" height="6" viewBox="0 0 10 6" fill="none" stroke="#777"><path d="M.5 5.500L5 1l4.500 4.500" /></svg>
        </ToTop>
        <RecorderBar />
        <Wizard />
      </Screen>
      <Shade />
      <Taskbar>
        <TaskList>
          {taskIcons.map((ic, i) => (
            <Task key={i} $line={i === 10}><svg width="16" height="16" viewBox="0 0 16 16" overflow="visible">{ic}</svg></Task>
          ))}
          {["#96abb9", "#1b6da5", "#1b6da5"].map((bg, i) => (
            <Task key={bg + i} $on={i === 2}><UiBox $s={16} $bg={bg}><Text $size={12} $weight={700} $color={i ? "#c5d9e6" : "#2b6690"} $font={`"Noto Sans"`}>Ui</Text></UiBox></Task>
          ))}
          <Task $line>
            <svg width="16" height="16" viewBox="0 0 16 16"><rect width="16" height="16" rx="3" fill="#3386bd" /><circle cx="8" cy="8" r="5" fill="#c6d0d6" /><circle cx="8" cy="8" r="3" fill="#c02f35" /></svg>
          </Task>
        </TaskList>
      </Taskbar>
      <Tray>
        <svg width="60" height="10" viewBox="0 0 60 10" fill="none" stroke="#888"><path d="M2 8l4-5 4 5M18 3h7v4h-7zM25.500 4v2M35 4h2l2-2v6l-2-2h-2z" /></svg>
      </Tray>
      <Watermark>
        <WatermarkBox><Fit w={29} $size={30} $weight={700} $color="#a02c1b" $font={`"Noto Sans"`}>Ui</Fit></WatermarkBox>
        <Fit w={72} $ml={4} $mt={-2} $size={31} $weight={700} $color="#962d1e" $font={`"Noto Sans"`}>Path</Fit>
        <Text $size={5} $color="#852b1f" $font={`"Noto Sans"`} $ml={-1} $mt={-24}>TM</Text>
      </Watermark>
      <TrayDate><Fit w={43} $size={8} $color="#555" $font={KR}>2019-09-30</Fit></TrayDate>
      <Pointer>
        <svg width="18" height="20" viewBox="0 0 18 20"><circle cx="8" cy="6" r="4.500" fill="none" stroke="#3ea3a6" strokeWidth="2" opacity=".75" /><path d="M8.500 7v10l2.300-2 1.600 3.600 1.400-.7-1.600-3.400h3z" fill="#ddd" stroke="#222" strokeWidth=".8" /></svg>
      </Pointer>
      <Progress><Played /></Progress>
      <Buttons>
        <Cell $w={31} $ml={762}><svg width="31" height="28" viewBox="0 0 24 24" preserveAspectRatio="none" fill="#eee"><path d={P.cc} /></svg></Cell>
        <GearWrap>
          <Icon d={P.gear} s={25} c="#e6e6e6" />
          <HD><Text $size={9.5} $weight={700} $color="#fff" $font={RB}>HD</Text></HD>
        </GearWrap>
        <Cell $w={28} $ml={18}>
          <svg width="28" height="23" viewBox="0 0 28 23"><rect x="1.200" y="1.200" width="25.600" height="20.600" rx="2" fill="none" stroke="#eee" strokeWidth="2.400" /><path fill="#eee" d="M12 10h11v8H12z" /></svg>
        </Cell>
        <Cell $w={22} $ml={19}>
          <svg width="21" height="14" viewBox="0 0 21 14"><path fill="none" stroke="#eee" strokeWidth="2.500" d="M1.200 1.200h18.600v11.600H1.200z" /></svg>
        </Cell>
        <Cell $w={30} $ml={19}><Icon d={P.cast} s={30} c="#eee" /></Cell>
        <Cell $w={22} $ml={19}>
          <svg width="21" height="21" viewBox="0 0 21 21" fill="none" stroke="#eee" strokeWidth="2.500"><path d="M1.200 8V1.200H8M13 1.200h6.800V8M19.800 13v6.800H13M8 19.800H1.200V13" /></svg>
        </Cell>
      </Buttons>
    </Player>
  );
}

/* ---------- below the player ---------- */

const Below = styled.div`
  flex: none;
  height: 140px;
  display: flex;
  background: #f9f9f9;
  overflow: hidden;
`;

const Details = styled.div`
  width: 567px;
  flex: none;
  display: flex;
  flex-direction: column;
`;

const TitleRow = styled.div`
  height: 78px;
  display: flex;
  align-items: center;
`;

const Actions = styled.div`
  height: 30px;
  margin-top: 20px;
  display: flex;
  align-items: center;
`;

const Playlist = styled.div`
  width: 443px;
  flex: none;
  height: 160px;
  margin-top: 30px;
  border: 1px solid #dedede;
  background: #fff;
  display: flex;
  flex-direction: column;
`;

const PlaylistTop = styled.div`
  height: 66px;
  padding: 11px 24px 0 20px;
  display: flex;
  justify-content: space-between;
  align-items: flex-start;
  & > svg { margin: 12px 3px 0 0; }
`;

const PlaylistText = styled.div`
  display: flex;
  flex-direction: column;
  align-items: flex-start;
  gap: 9px;
  padding-top: 3px;
`;

const PlaylistTools = styled.div`
  height: 34px;
  display: flex;
  align-items: center;
`;

const NextItem = styled.div`
  display: flex;
  margin: 7px 0 0 91px;
`;

const Thumb = styled.div`
  width: 62px;
  height: 30px;
  background: #3d4037;
`;

const Desktop = styled.div`
  flex: none;
  height: 9px;
  border-top: 1px solid #4b7078;
  background: linear-gradient(90deg, #cfe2ea 0 129px, #f0f5f6 129px 190px, #cde0e8 190px 400px, #d5e2e4 700px, #c9dce4);
`;

function Info() {
  const grey = "#606060";
  const ic = "#8f8f8f";
  return (
    <Below>
      <Details>
        <TitleRow>
          <Fit w={386} $ml={-1} $size={22.5} $color="#0a0a0a" $font={RB}>g, Data Manipulation, Excel Application</Fit>
          <Fit w={139} $ml={7} $mt={-3} $size={23} $weight={350} $color="#0a0a0a">사용하여 특정</Fit>
        </TitleRow>
        <Actions>
          <Cell $w={26} $ml={127}><Icon d={P.up} s={26} c={ic} /></Cell>
          <Text $ml={9} $size={16.25} $weight={500} $color={grey} $font={RB}>5</Text>
          <Cell $w={26} $ml={29}><Icon d={P.down} s={26} c={ic} /></Cell>
          <Text $ml={10} $size={16.25} $weight={500} $color={grey} $font={RB}>0</Text>
          <Cell $w={26} $ml={27}><Icon d={P.share} s={26} c={ic} /></Cell>
          <Fit w={52} $ml={12} $size={16.25} $weight={500} $color={grey} $font={RB}>SHARE</Fit>
          <Cell $w={26} $ml={29}><Icon d={P.save} s={26} c={ic} /></Cell>
          <Fit w={40} $ml={10} $size={16.25} $weight={500} $color={grey} $font={RB}>SAVE</Fit>
          <Cell $w={26} $ml={31}>
            <svg width="24" height="9" viewBox="0 0 24 9" fill={ic}><circle cx="3" cy="6" r="2.700" /><circle cx="12" cy="6" r="2.700" /><circle cx="21" cy="6" r="2.700" /></svg>
          </Cell>
        </Actions>
      </Details>
      <Playlist>
        <PlaylistTop>
          <PlaylistText>
            <Fit w={202} $size={17.5} $weight={350} $color="#111" $font={KRPAGE}>유아이패스 스튜디오 강의</Fit>
            <Fit w={169} $mt={1} $size={15} $color="#7b7b7b" $font={RB}>UiPath Community - 2 / 8</Fit>
          </PlaylistText>
          <svg width="26" height="26" viewBox="0 0 24 24" fill="none" stroke="#606060" strokeWidth="2.200"><path d="M6 15.500l6-6 6 6" /></svg>
        </PlaylistTop>
        <PlaylistTools>
          <Cell $w={28} $ml={21}><Icon d={P.repeat} s={28} c={ic} /></Cell>
          <Cell $w={30} $ml={31}><Icon d={P.shuffle} s={30} c={ic} /></Cell>
          <Cell $w={30} $ml={271}><Icon d={P.saved} s={30} c="#065fd4" /></Cell>
        </PlaylistTools>
        <NextItem>
          <Thumb />
          <Fit w={240} $ml={11} $size={16} $weight={500} $color="#111">유아이패스 스튜디오 강의 데이터 조작</Fit>
        </NextItem>
      </Playlist>
    </Below>
  );
}

export default function App() {
  return (
    <Page>
      <Global />
      <Browser />
      <Header />
      <Video />
      <Info />
      <Desktop />
      <Marker />
    </Page>
  );
}
